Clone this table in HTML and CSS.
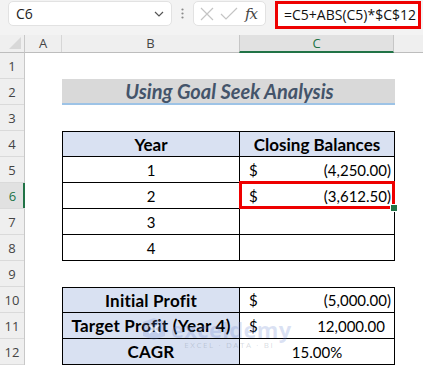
FILE: index.html
```html
<!DOCTYPE html>
<html lang="en">
<head>
<meta charset="utf-8">
<title>Goal Seek – CAGR</title>
<link rel="stylesheet" href="styles.css">
</head>
<body>
<div class="app">
  <div class="toolbar">
    <div class="namebox">
      <span class="cellref">C6</span>
      <svg class="chev" width="10" height="6" viewBox="0 0 10 6"><path d="M1 1 L5 5 L9 1" fill="none" stroke="#555" stroke-width="1.2"/></svg>
    </div>
    <div class="grip">
      <svg width="3" height="11" viewBox="0 0 3 11"><circle cx="1.5" cy="1.5" r="1.1" fill="#8a8a8a"/><circle cx="1.5" cy="5.5" r="1.1" fill="#8a8a8a"/><circle cx="1.5" cy="9.5" r="1.1" fill="#8a8a8a"/></svg>
    </div>
    <div class="fxbox">
      <svg width="16" height="16" viewBox="0 0 16 16"><path d="M2 2 L14 14 M14 2 L2 14" stroke="#c4c4c4" stroke-width="1.2" fill="none"/></svg>
      <svg width="18" height="16" viewBox="0 0 18 16"><path d="M1 8 L6 13 L17 2" stroke="#c4c4c4" stroke-width="1.2" fill="none"/></svg>
      <span class="fx">fx</span>
    </div>
    <div class="formula">=C5+ABS(C5)*$C$12</div>
  </div>

  <div class="sheet">
    <div class="corner"><span class="tri"></span></div>
    <div class="colheads">
      <div class="colhead ca">A</div>
      <div class="colhead cb">B</div>
      <div class="colhead cc active">C</div>
      <div class="colhead cd"></div>
    </div>
    <div class="rowheads">
      <div class="rowhead">1</div>
      <div class="rowhead">2</div>
      <div class="rowhead">3</div>
      <div class="rowhead">4</div>
      <div class="rowhead">5</div>
      <div class="rowhead active">6</div>
      <div class="rowhead">7</div>
      <div class="rowhead">8</div>
      <div class="rowhead">9</div>
      <div class="rowhead">10</div>
      <div class="rowhead">11</div>
      <div class="rowhead">12</div>
    </div>
    <div class="cells">
      <div class="title">Using Goal Seek Analysis</div>

      <div class="tbl balances">
        <div class="c head">Year</div>
        <div class="c head">Closing Balances</div>
        <div class="c num">1</div>
        <div class="c money"><span>$</span><span>(4,250.00)</span></div>
        <div class="c num">2</div>
        <div class="c money sel"><span>$</span><span>(3,612.50)</span></div>
        <div class="c num">3</div>
        <div class="c"></div>
        <div class="c num">4</div>
        <div class="c"></div>
      </div>

      <div class="tbl profit">
        <div class="c head label">Initial Profit</div>
        <div class="c money"><span>$</span><span>(5,000.00)</span></div>
        <div class="c head label">Target Profit (Year 4)</div>
        <div class="c money pos"><span>$</span><span>12,000.00</span></div>
        <div class="c head label">CAGR</div>
        <div class="c pct">15.00%</div>
      </div>

      <div class="mark">
        <div class="mark-row">
          <svg width="26" height="22" viewBox="0 0 26 22"><path d="M2 4 L13 0 L24 4 L24 18 L13 22 L2 18 Z" fill="rgba(110,135,210,0.22)"/><path d="M8 7 L18 15 M18 7 L8 15" stroke="rgba(255,255,255,0.7)" stroke-width="2"/></svg>
          <span class="mark-name">exceldemy</span>
        </div>
        <div class="mark-sub">EXCEL · DATA · BI</div>
      </div>
    </div>
  </div>
</div>
</body>
</html>
```

FILE: styles.css
```css
* { box-sizing: border-box; }

html, body {
  margin: 0;
  padding: 0;
  background: #ffffff;
}

.app {
  width: 423px;
  height: 367px;
  overflow: hidden;
  font-family: "Open Sans", "Noto Sans", sans-serif;
  color: #000;
}

/* ---------- formula bar ---------- */
.toolbar {
  height: 35px;
  background: #f3f3f3;
  display: flex;
  align-items: flex-start;
  padding: 1px 0 0 8px;
}

.namebox {
  width: 164px;
  height: 25px;
  background: #fff;
  border: 1px solid #e2e2e2;
  border-radius: 5px;
  display: flex;
  align-items: center;
  justify-content: space-between;
  padding: 0 7px 0 7px;
}

.cellref {
  font-size: 14px;
  color: #222;
}

.grip {
  width: 21px;
  height: 25px;
  display: flex;
  align-items: center;
  justify-content: center;
}

.fxbox {
  width: 73px;
  height: 25px;
  background: #fff;
  border: 1px solid #e2e2e2;
  border-radius: 5px;
  display: flex;
  align-items: center;
  gap: 5px;
  padding: 0 0 0 5px;
}

.fx {
  font-family: "DejaVu Serif", "Liberation Serif", serif;
  font-style: italic;
  font-size: 15px;
  color: #444;
  margin-left: 2px;
  letter-spacing: -1px;
}

.formula {
  margin-left: 9px;
  width: 146px;
  height: 28px;
  background: #fff;
  border: 3px solid #ee0000;
  font-size: 14px;
  line-height: 21px;
  padding-left: 6px;
  white-space: nowrap;
  overflow: hidden;
  color: #111;
}

/* ---------- sheet grid ---------- */
.sheet {
  display: grid;
  grid-template-columns: 25px 1fr;
  grid-template-rows: 18px 1fr;
}

.corner {
  background: #efefef;
  border-right: 1px solid #c8c8c8;
  border-bottom: 1px solid #bdbdbd;
  position: relative;
}

.tri {
  position: absolute;
  right: 3px;
  bottom: 3px;
  width: 0;
  height: 0;
  border-left: 12px solid transparent;
  border-bottom: 12px solid #d8d8d8;
}

.colheads {
  display: flex;
  background: #efefef;
  border-bottom: 1px solid #bdbdbd;
}

.colhead {
  height: 17px;
  font-size: 13px;
  line-height: 17px;
  text-align: center;
  color: #444;
  border-right: 1px solid #d6d6d6;
}

.ca { width: 37px; }
.cb { width: 178px; }
.cc { width: 155px; }
.cd { flex: 1; border-right: none; }

.colhead.active {
  background: #e1e1e1;
  color: #217346;
  border-left: 1px solid #c6c6c6;
  border-right: 1px solid #c6c6c6;
  border-bottom: 2px solid #217346;
  height: 18px;
  margin-left: -1px;
}

.rowheads {
  display: flex;
  flex-direction: column;
  background: #efefef;
  border-right: 1px solid #c8c8c8;
}

.rowhead {
  height: 26px;
  border-bottom: 1px solid #dadada;
  font-size: 13px;
  line-height: 26px;
  text-align: center;
  color: #444;
}

.rowhead.active {
  background: #e1e1e1;
  color: #217346;
  box-shadow: inset -2px 0 0 #217346;
  margin-right: -1px;
}

.cells {
  position: relative;
  display: grid;
  grid-template-columns: 37px 178px 155px 1fr;
  grid-template-rows: repeat(12, 26px);
  font-family: "Lato", "Carlito", sans-serif;
}

.title {
  grid-column: 2 / 4;
  grid-row: 2;
  background: #d9d9d9;
  border-bottom: 2px solid #9dc3e6;
  color: #44546a;
  font-weight: bold;
  font-style: italic;
  font-size: 20px;
  line-height: 25px;
  text-align: center;
  padding-left: 2px;
}

/* ---------- bordered tables ---------- */
.tbl {
  grid-column: 2 / 4;
  display: grid;
  grid-template-columns: 177px 155px;
  border-left: 1px solid #000;
  border-top: 1px solid #000;
}

.balances {
  grid-row: 4 / 9;
  grid-template-rows: 25px repeat(4, 26px);
}

.profit {
  grid-row: 10 / 13;
  grid-template-rows: 25px repeat(2, 26px);
}

.c {
  border-right: 1px solid #000;
  border-bottom: 1px solid #000;
  font-size: 15px;
  display: flex;
  align-items: center;
  justify-content: center;
}

.head {
  background: #d9e1f2;
  font-weight: bold;
  font-size: 17px;
}

.label {
  letter-spacing: 0.2px;
}

.money {
  justify-content: space-between;
  padding: 0 3px 0 9px;
}

.money.pos {
  padding-right: 9px;
}

.sel {
  position: relative;
}

.sel::after {
  content: "";
  position: absolute;
  left: -1px;
  top: -2px;
  right: -1px;
  bottom: -1px;
  border: 3px solid #ee0000;
}

.sel::before {
  content: "";
  position: absolute;
  right: -4px;
  bottom: -4px;
  width: 6px;
  height: 6px;
  background: #217346;
  border: 1px solid #fff;
  z-index: 1;
}

/* ---------- watermark ---------- */
.mark {
  position: absolute;
  left: 116px;
  top: 263px;
  display: flex;
  flex-direction: column;
  align-items: center;
  pointer-events: none;
}

.mark-row {
  display: flex;
  align-items: center;
  gap: 4px;
}

.mark-name {
  font-family: "Open Sans", sans-serif;
  font-weight: bold;
  font-size: 22px;
  line-height: 26px;
  color: rgba(110, 135, 210, 0.25);
  letter-spacing: 0.3px;
}

.mark-sub {
  font-family: "Open Sans", sans-serif;
  font-size: 8px;
  letter-spacing: 1.6px;
  color: rgba(120, 130, 150, 0.3);
  margin-left: 26px;
  margin-top: -3px;
}
```
